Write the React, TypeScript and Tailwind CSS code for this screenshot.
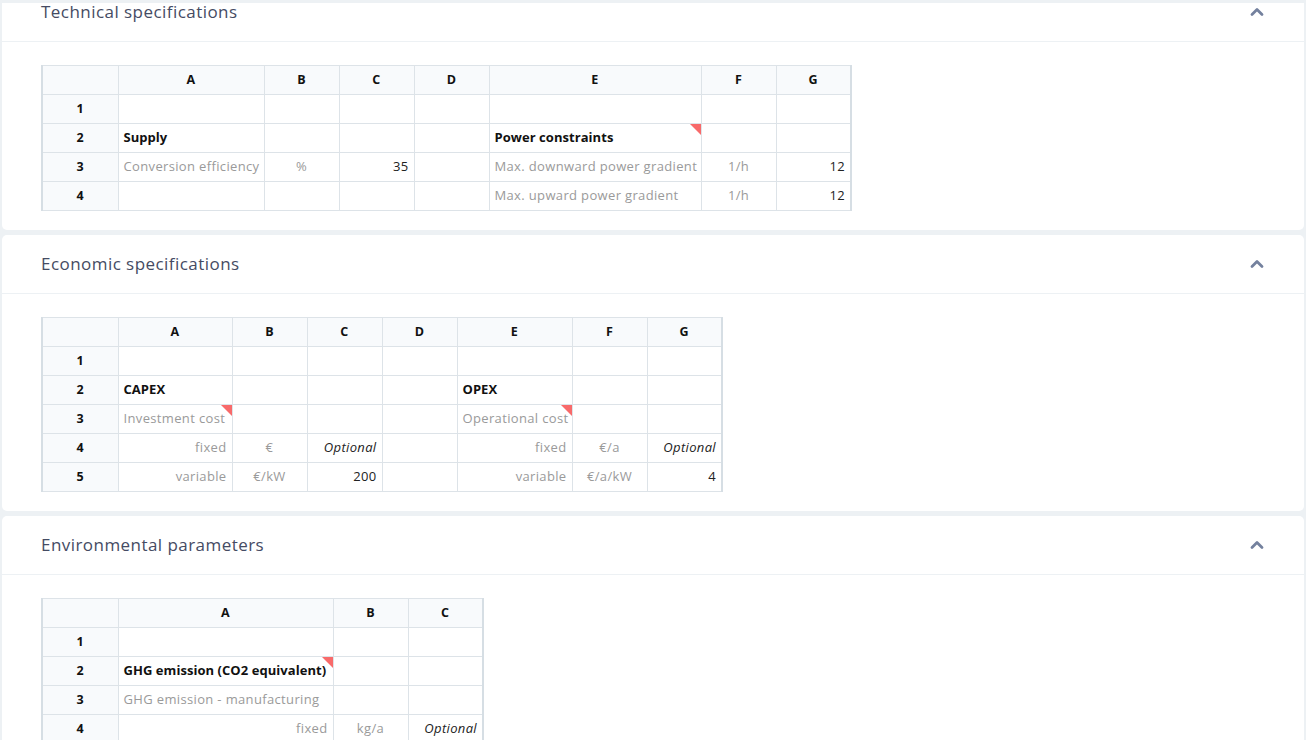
import React from "react";

type Cell = {
  text?: string;
  kind?: "bold" | "label" | "sub" | "unit" | "value" | "optional";
  flag?: boolean;
};

interface SheetProps {
  cols: { name: string; width: number }[];
  rows: Cell[][];
}

const cellClass = (kind?: Cell["kind"]) => {
  switch (kind) {
    case "bold":
      return "text-left font-bold text-[#111] tracking-[0.05px]";
    case "label":
      return "text-left text-[#9a9a9a]";
    case "sub":
      return "text-right text-[#9a9a9a]";
    case "unit":
      return "text-center text-[#9a9a9a]";
    case "value":
      return "text-right text-[#222]";
    case "optional":
      return "text-right italic text-[#222]";
    default:
      return "";
  }
};

const Sheet = ({ cols, rows }: SheetProps) => {
  const total = 76 + cols.reduce((s, c) => s + c.width, 0);
  return (
    <table
      className="border-collapse table-fixed border-y border-x-2 border-[#d6dee4] text-[13px] tracking-[0.35px]"
      style={{ width: total }}
    >
      <colgroup>
        <col style={{ width: 76 }} />
        {cols.map((c) => (
          <col key={c.name} style={{ width: c.width }} />
        ))}
      </colgroup>
      <thead>
        <tr className="h-[29px]">
          <th className="border border-[#dde3e8] bg-[#f8fafc]"></th>
          {cols.map((c) => (
            <th
              key={c.name}
              className="border border-[#dde3e8] bg-[#f8fafc] text-center text-[12.5px] font-bold text-[#111]"
            >
              {c.name}
            </th>
          ))}
        </tr>
      </thead>
      <tbody>
        {rows.map((row, i) => (
          <tr key={i} className="h-[29px]">
            <td className="border border-[#dde3e8] bg-[#f8fafc] text-center text-[12.5px] font-bold text-[#111]">
              {i + 1}
            </td>
            {cols.map((c, j) => {
              const cell = row[j] || {};
              return (
                <td
                  key={c.name}
                  className={`relative border border-[#dde3e8] px-[5px] whitespace-nowrap overflow-hidden ${cellClass(cell.kind)}`}
                >
                  {cell.text}
                  {cell.flag && (
                    <span className="absolute right-0 top-0 h-0 w-0 border-b-[11px] border-b-transparent border-r-[11px] border-r-[#f86a6a]" />
                  )}
                </td>
              );
            })}
          </tr>
        ))}
      </tbody>
    </table>
  );
};

const Chevron = () => (
  <svg width="14" height="10" viewBox="0 0 14 10" fill="none">
    <path d="M2 7.5 L7 2.5 L12 7.5" stroke="#74819e" strokeWidth="2.8" strokeLinecap="round" strokeLinejoin="round" />
  </svg>
);

const Card = ({ title, children }: { title: string; children: React.ReactNode }) => (
  <section className="bg-white rounded-[5px]">
    <header className="h-[59px] flex flex-row justify-between items-center pl-[39px] pr-[40px] border-b border-[#edf1f4]">
      <h2 className="text-[17px] font-medium text-[#454b63] tracking-[0.45px]">{title}</h2>
      <Chevron />
    </header>
    <div className="pl-[39px] pt-[23px] pb-[19px]">{children}</div>
  </section>
);

const techCols = [
  { name: "A", width: 146 },
  { name: "B", width: 75 },
  { name: "C", width: 75 },
  { name: "D", width: 75 },
  { name: "E", width: 212 },
  { name: "F", width: 75 },
  { name: "G", width: 75 },
];

const econCols = [
  { name: "A", width: 114 },
  { name: "B", width: 75 },
  { name: "C", width: 75 },
  { name: "D", width: 75 },
  { name: "E", width: 115 },
  { name: "F", width: 75 },
  { name: "G", width: 75 },
];

const envCols = [
  { name: "A", width: 215 },
  { name: "B", width: 75 },
  { name: "C", width: 75 },
];

export default function App() {
  return (
    <div
      className="relative h-[740px] overflow-hidden bg-[#edf1f4]"
      style={{ fontFamily: '"Open Sans", "Liberation Sans", sans-serif' }}
    >
      <div className="absolute left-0 right-0 top-0 h-[3px] bg-[#edf1f4] z-10" />
      <div className="-mt-[17px] px-[2px] flex flex-col gap-[5px]">
        <Card title="Technical specifications">
          <Sheet
            cols={techCols}
            rows={[
              [],
              [{ text: "Supply", kind: "bold" }, {}, {}, {}, { text: "Power constraints", kind: "bold", flag: true }],
              [
                { text: "Conversion efficiency", kind: "label" },
                { text: "%", kind: "unit" },
                { text: "35", kind: "value" },
                {},
                { text: "Max. downward power gradient", kind: "label" },
                { text: "1/h", kind: "unit" },
                { text: "12", kind: "value" },
              ],
              [
                {},
                {},
                {},
                {},
                { text: "Max. upward power gradient", kind: "label" },
                { text: "1/h", kind: "unit" },
                { text: "12", kind: "value" },
              ],
            ]}
          />
        </Card>
        <Card title="Economic specifications">
          <Sheet
            cols={econCols}
            rows={[
              [],
              [{ text: "CAPEX", kind: "bold" }, {}, {}, {}, { text: "OPEX", kind: "bold" }],
              [
                { text: "Investment cost", kind: "label", flag: true },
                {},
                {},
                {},
                { text: "Operational cost", kind: "label", flag: true },
              ],
              [
                { text: "fixed", kind: "sub" },
                { text: "€", kind: "unit" },
                { text: "Optional", kind: "optional" },
                {},
                { text: "fixed", kind: "sub" },
                { text: "€/a", kind: "unit" },
                { text: "Optional", kind: "optional" },
              ],
              [
                { text: "variable", kind: "sub" },
                { text: "€/kW", kind: "unit" },
                { text: "200", kind: "value" },
                {},
                { text: "variable", kind: "sub" },
                { text: "€/a/kW", kind: "unit" },
                { text: "4", kind: "value" },
              ],
            ]}
          />
        </Card>
        <Card title="Environmental parameters">
          <Sheet
            cols={envCols}
            rows={[
              [],
              [{ text: "GHG emission (CO2 equivalent)", kind: "bold", flag: true }],
              [{ text: "GHG emission - manufacturing", kind: "label" }],
              [
                { text: "fixed", kind: "sub" },
                { text: "kg/a", kind: "unit" },
                { text: "Optional", kind: "optional" },
              ],
              [
                { text: "variable", kind: "sub" },
                { text: "kg/a/kW", kind: "unit" },
                { text: "Optional", kind: "optional" },
              ],
            ]}
          />
        </Card>
      </div>
    </div>
  );
}
